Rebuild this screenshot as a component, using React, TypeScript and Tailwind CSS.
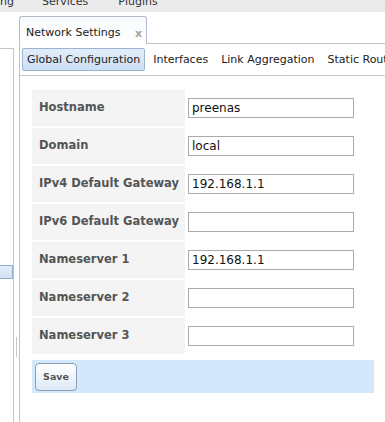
const rows = [
  { label: "Hostname", value: "preenas" },
  { label: "Domain", value: "local" },
  { label: "IPv4 Default Gateway", value: "192.168.1.1" },
  { label: "IPv6 Default Gateway", value: "" },
  { label: "Nameserver 1", value: "192.168.1.1" },
  { label: "Nameserver 2", value: "" },
  { label: "Nameserver 3", value: "" },
];

const subTabs = ["Interfaces", "Link Aggregation", "Static Routes"];

export default function App() {
  return (
    <div className="w-[385px] h-[422px] overflow-hidden bg-white font-['DejaVu_Sans',sans-serif] text-[#222]">
      {/* top menu, mostly scrolled off */}
      <div className="h-[12px] bg-[#ebebeb] overflow-hidden text-[11px] text-[#333]">
        <div className="flex mt-[-5px] leading-[14px] whitespace-nowrap">
          <span>ng</span>
          <span className="ml-[28px]">Services</span>
          <span className="ml-[30px]">Plugins</span>
        </div>
      </div>

      <div className="flex h-[410px]">
        {/* collapsed left tree */}
        <div className="w-[14px] shrink-0 mt-[36px] border-t border-r border-[#c5c5c5]">
          <div className="mt-[216px] h-[14px] bg-gradient-to-b from-[#e4eefa] to-[#cfe0f4] border-y border-r border-[#8fa9c9]" />
        </div>

        {/* splitter */}
        <div className="w-[5px] shrink-0 flex justify-center pt-[325px]">
          <div className="w-px h-[20px] bg-[#c8c8c8]" />
        </div>

        {/* main panel */}
        <div className="flex-1 min-w-0 flex flex-col mt-[4px]">
          <div className="flex h-[28px]">
            <div className="w-[128px] shrink-0 h-[28px] border border-b-0 border-[#b3bcc9] rounded-t-[3px] bg-gradient-to-b from-[#f7f9fc] to-white flex items-center justify-between pl-[6px] pr-[4px] pt-[6px] text-[11px] text-[#222]">
              <span>Network Settings</span>
              <span className="text-[#a3a3a3] font-bold text-[11px] leading-none">x</span>
            </div>
            <div className="flex-1 border-b border-[#c2c2c2]" />
          </div>

          <div className="flex-1 border-l border-[#c2c2c2]">
            <div className="h-[32px] border-b border-[#c8c8c8] flex items-center pl-[2px] gap-[3px] text-[11px] whitespace-nowrap">
              <div className="h-[23px] px-[4px] pt-[1px] flex items-center border border-[#9db4d0] rounded-[2px] bg-gradient-to-b from-[#e2edf9] to-[#cddff4]">
                Global Configuration
              </div>
              {subTabs.map((t) => (
                <div key={t} className="h-[23px] px-[5px] pt-[1px] flex items-center">
                  {t}
                </div>
              ))}
            </div>

            <div className="pl-[12px] pt-[14px]">
              <div className="flex flex-col gap-[2px]">
                {rows.map((r) => (
                  <div key={r.label} className="flex h-[36px]">
                    <div className="w-[153px] shrink-0 bg-[#f4f4f4] pl-[7px] flex items-center font-bold text-[11.5px] text-[#555]">
                      {r.label}
                    </div>
                    <div className="ml-[3px] flex items-center">
                      <input
                        readOnly
                        value={r.value}
                        className="w-[166px] h-[20px] border border-[#ababab] px-[3px] text-[12px] text-[#111] outline-none font-['DejaVu_Sans',sans-serif]"
                      />
                    </div>
                  </div>
                ))}
              </div>

              <div className="mt-[6px] w-[342px] h-[33px] bg-[#d4e8fb] p-[3px]">
                <button className="w-[42px] h-[28px] rounded-[4px] border border-[#8d9db3] bg-gradient-to-b from-white to-[#dde9f6] text-[9.5px] font-bold text-[#555]">
                  Save
                </button>
              </div>
            </div>
          </div>
        </div>
      </div>
    </div>
  );
}
